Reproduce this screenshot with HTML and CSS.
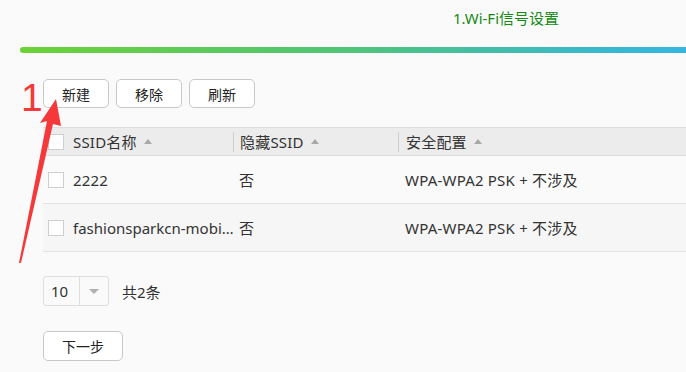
FILE: index.html
```html
<!DOCTYPE HTML>
<html lang="zh-CN">
<head>
    <meta charset="utf-8" />
    <title>Wi-Fi信号设置</title>
    <link rel="stylesheet" href="styles.css">
</head>
<body>
    <div class="steps">
        <div class="step-title">1.Wi-Fi信号设置</div>
        <div class="step-bar"></div>
    </div>

    <div class="content">
        <div class="toolbar">
            <button class="btn">新建</button>
            <button class="btn">移除</button>
            <button class="btn">刷新</button>
        </div>

        <div class="grid">
            <div class="grid-row grid-head">
                <div class="cell col-name"><span class="check"></span>SSID名称<span class="sort"></span></div>
                <div class="cell col-hide">隐藏SSID<span class="sort"></span></div>
                <div class="cell col-sec">安全配置<span class="sort"></span></div>
            </div>
            <div class="grid-row">
                <div class="cell col-name"><span class="check"></span>2222</div>
                <div class="cell col-hide">否</div>
                <div class="cell col-sec">WPA-WPA2 PSK + 不涉及</div>
            </div>
            <div class="grid-row alt">
                <div class="cell col-name" title="fashionsparkcn-mobile"><span class="check"></span><span class="short">fashionsparkcn-mobi…</span></div>
                <div class="cell col-hide">否</div>
                <div class="cell col-sec">WPA-WPA2 PSK + 不涉及</div>
            </div>
        </div>

        <div class="pager">
            <div class="page-size">
                <span class="page-num">10</span>
                <span class="page-drop"><span class="caret"></span></span>
            </div>
            <span class="total">共2条</span>
        </div>

        <button class="btn btn-next">下一步</button>
    </div>

    <!-- annotation -->
    <div class="mark">1</div>
    <svg class="arrow" width="70" height="270" viewBox="0 0 70 270">
        <polygon points="56,99 40,123 47,121 19,263 21,263 53,124 61,126" fill="#f5393a" />
    </svg>
</body>
</html>
```

FILE: styles.css
```css
html, body {
    margin: 0;
    background: #fafafa;
    color: #333;
    font-family: "Noto Sans", "Noto Sans CJK SC", sans-serif;
    font-size: 15px;
}

body {
    position: relative;
    height: 372px;
    overflow: hidden;
}

.steps {
    padding-top: 8px;
}

.step-title {
    padding-left: 453px;
    color: #158a15;
    font-size: 15px;
    line-height: 20px;
    height: 20px;
}

.step-bar {
    margin: 19px 0 0 20px;
    height: 6px;
    border-radius: 3px 0 0 3px;
    background: linear-gradient(to right, #6bd235 0%, #4fc47a 50%, #3ab9c8 85%, #35b6e0 100%);
}

.content {
    padding-left: 43px;
}

.toolbar {
    display: flex;
    gap: 7px;
    margin-top: 26px;
}

.btn {
    width: 66px;
    height: 29px;
    padding: 0;
    border: 1px solid #c8c8c8;
    border-radius: 5px;
    background: #fff;
    color: #222;
    font-family: "Noto Sans CJK SC", sans-serif;
    font-size: 14px;
}

.grid {
    margin-top: 19px;
}

.grid-row {
    display: flex;
    height: 47px;
    align-items: center;
    border-bottom: 1px solid #e3e3e3;
}

.grid-row.alt {
    background: #f6f6f6;
}

.grid-head {
    height: 27px;
    background: #ececec;
    border-top: 1px solid #dedede;
    border-bottom: 1px solid #dcdcdc;
}

.cell {
    display: flex;
    align-items: center;
    white-space: nowrap;
    box-sizing: border-box;
    letter-spacing: 0.2px;
}

.cell .short {
    letter-spacing: 0;
}

.col-name {
    width: 190px;
    padding-left: 5px;
}

.col-hide {
    width: 165px;
    padding-left: 6px;
}

.col-sec {
    flex: 1;
    padding-left: 7px;
}

.grid-head .col-hide,
.grid-head .col-sec {
    border-left: 1px solid #d0d0d0;
    height: 20px;
}

.check {
    display: inline-block;
    width: 14px;
    height: 14px;
    border: 1px solid #cfcfcf;
    background: #fff;
    margin-right: 9px;
    flex: none;
}

.sort {
    display: inline-block;
    margin-left: 7px;
    border-left: 4px solid transparent;
    border-right: 4px solid transparent;
    border-bottom: 5px solid #a8a8a8;
    width: 0;
    height: 0;
}

.pager {
    display: flex;
    align-items: center;
    margin-top: 24px;
}

.page-size {
    display: flex;
    width: 64px;
    height: 28px;
    border: 1px solid #dedede;
    border-radius: 3px;
    background: #fafafa;
}

.page-num {
    width: 36px;
    padding-left: 7px;
    line-height: 28px;
    border-right: 1px solid #dedede;
    box-sizing: border-box;
}

.page-drop {
    flex: 1;
    display: flex;
    align-items: center;
    justify-content: center;
}

.caret {
    border-left: 5px solid transparent;
    border-right: 5px solid transparent;
    border-top: 5px solid #b0b0b0;
    width: 0;
    height: 0;
}

.total {
    margin-left: 13px;
}

.btn-next {
    display: block;
    width: 80px;
    height: 30px;
    margin-top: 25px;
    font-size: 14px;
}

.mark {
    position: absolute;
    left: 21px;
    top: 78px;
    color: #f5393a;
    font-family: "Liberation Sans", sans-serif;
    font-size: 39px;
    line-height: 40px;
}

.arrow {
    position: absolute;
    left: 0;
    top: 0;
}
```
